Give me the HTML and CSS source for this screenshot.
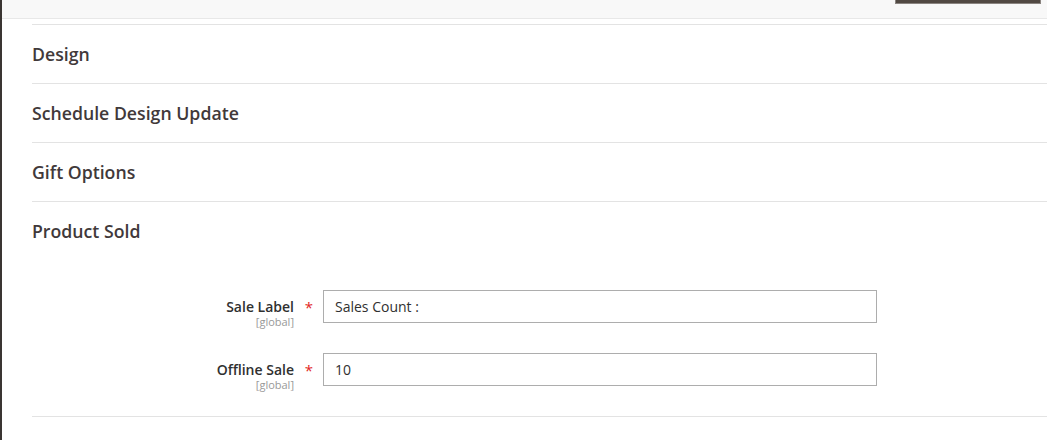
FILE: index.html
```html
<!DOCTYPE html>
<html>
<head>
<meta charset="utf-8">
<link rel="stylesheet" href="styles.css">
</head>
<body>
<div class="page">
  <div class="topbar"><span class="topbar-btn"></span></div>
  <div class="content">
    <div class="section"><div class="section-title">Design</div></div>
    <div class="section"><div class="section-title">Schedule Design Update</div></div>
    <div class="section"><div class="section-title">Gift Options</div></div>
    <div class="section">
      <div class="section-title">Product Sold</div>
      <div class="fields">
        <div class="field">
          <div class="label"><span class="label-text">Sale Label</span><span class="scope">[global]</span></div>
          <span class="req">*</span>
          <div class="input">Sales Count :</div>
        </div>
        <div class="field">
          <div class="label"><span class="label-text">Offline Sale</span><span class="scope">[global]</span></div>
          <span class="req">*</span>
          <div class="input">10</div>
        </div>
      </div>
    </div>
    <div class="section end"></div>
  </div>
</div>
</body>
</html>
```

FILE: styles.css
```css
* { box-sizing: border-box; }
html, body { margin: 0; padding: 0; background: #fff; }
body {
  font-family: "Open Sans", "Liberation Sans", sans-serif;
  color: #303030;
}
.page {
  border-left: 2px solid #3a3532;
  min-height: 440px;
  overflow: hidden;
}
.topbar {
  height: 19px;
  background: #f8f8f8;
  border-bottom: 1px solid #e8e8e8;
  display: flex;
  justify-content: flex-end;
  padding-right: 6px;
}
.topbar-btn {
  display: block;
  width: 146px;
  height: 4px;
  background: #514943;
  border: 1px solid #8a8480;
  border-top: none;
}
.content {
  padding-left: 30px;
  margin-top: 5px;
}
.section {
  border-top: 1px solid #e3e3e3;
}
.section-title {
  height: 58px;
  display: flex;
  align-items: center;
  font-size: 17.7px;
  font-weight: 600;
  color: #41393a;
  padding-bottom: 1px;
}
.fields {
  padding: 30px 0 30px;
  display: flex;
  flex-direction: column;
  gap: 30px;
}
.field {
  display: grid;
  grid-template-columns: 262px 29px 554px;
  align-items: start;
  height: 33px;
}
.label {
  display: flex;
  flex-direction: column;
  align-items: flex-end;
  padding-top: 7px;
}
.label-text {
  font-size: 14px;
  font-weight: 600;
  color: #303030;
  line-height: 19px;
}
.scope {
  font-size: 11px;
  color: #999;
  line-height: 12px;
}
.req {
  color: #e22626;
  font-size: 15px;
  text-align: center;
  padding-top: 8px;
  line-height: 19px;
  padding-left: 1px;
}
.input {
  height: 33px;
  border: 1px solid #adadad;
  padding: 0 11px;
  font-size: 14px;
  line-height: 31px;
  color: #303030;
}
.section.end { height: 24px; }
```
